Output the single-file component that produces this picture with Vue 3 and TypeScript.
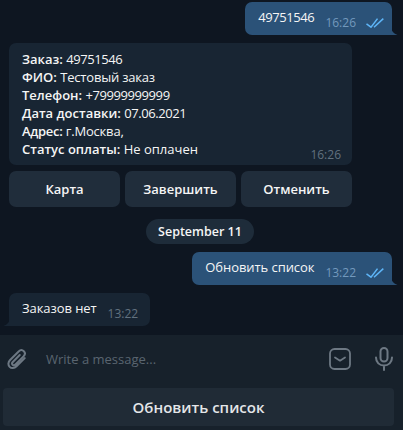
<script setup lang="ts">
const orderLines: { label: string; value: string; kind: string; labelKind?: string }[] = [
  { label: 'Заказ:', value: '49751546', kind: 'digits' },
  { label: 'ФИО:', value: 'Тестовый заказ', kind: 'tight' },
  { label: 'Телефон:', value: '+79999999999', kind: 'digits' },
  { label: 'Дата доставки:', value: '07.06.2021', kind: 'digits' },
  { label: 'Адрес:', value: 'г.Москва,', kind: 'tight', labelKind: 'tight-strong' },
  { label: 'Статус оплаты:', value: 'Не оплачен', kind: 'plain' },
]
const actions: string[] = ['Карта', 'Завершить', 'Отменить']
</script>

<template>
  <div class="screen">
    <div class="history">
      <div class="row out first">
        <div class="bubble outgoing">
          <span class="text digits">49751546</span>
          <span class="meta"><span class="time">16:26</span>
            <svg class="ticks" width="18" height="10" viewBox="0 0 18 10" fill="none" stroke="#5eb5f7" stroke-width="1.5">
              <path d="M.5 5.8 5 9.2 11.5.6" /><path d="M8 9.2 17.3.6" />
            </svg>
          </span>
          <svg class="tail tail-out" width="7" height="9" viewBox="0 0 7 9"><path d="M0 0C0 4 2 7.5 6.5 9H0Z" fill="#2b5278" /></svg>
        </div>
      </div>

      <div class="bubble incoming order">
        <div v-for="line in orderLines" :key="line.label" class="line"><b :class="line.labelKind">{{ line.label }}</b> <span :class="line.kind">{{ line.value }}</span></div>
        <span class="order-time">16:26</span>
      </div>

      <div class="actions">
        <button v-for="a in actions" :key="a" class="action">{{ a }}</button>
      </div>

      <div class="date-wrap"><span class="date">September 11</span></div>

      <div class="row out">
        <div class="bubble outgoing">
          <span class="text slim">Обновить список</span>
          <span class="meta"><span class="time">13:22</span>
            <svg class="ticks" width="18" height="10" viewBox="0 0 18 10" fill="none" stroke="#5eb5f7" stroke-width="1.5">
              <path d="M.5 5.8 5 9.2 11.5.6" /><path d="M8 9.2 17.3.6" />
            </svg>
          </span>
          <svg class="tail tail-out" width="7" height="9" viewBox="0 0 7 9"><path d="M0 0C0 4 2 7.5 6.5 9H0Z" fill="#2b5278" /></svg>
        </div>
      </div>

      <div class="row in">
        <div class="bubble incoming short">
          <span class="text slim">Заказов нет</span>
          <span class="meta in-meta"><span class="time in-time">13:22</span></span>
          <svg class="tail tail-in" width="7" height="9" viewBox="0 0 7 9"><path d="M7 0C7 4 5 7.5 .5 9H7Z" fill="#182533" /></svg>
        </div>
      </div>
    </div>

    <div class="composer">
      <div class="input-row">
        <svg class="clip" width="20" height="23" viewBox="0 0 22 24" fill="none" stroke="#6d7883" stroke-width="2.2" stroke-linecap="round">
          <path d="M19.5 10.5 10.5 19.5C8 22 4.7 22 2.9 20.1 1 18.2 1 15 3.4 12.6L12.8 3.2C14.6 1.4 17 1.4 18.5 2.9 20 4.4 20 6.8 18.2 8.6L9.3 17.5C8.3 18.5 7 18.5 6.2 17.7 5.4 16.9 5.5 15.6 6.4 14.7L14 7" />
        </svg>
        <span class="placeholder">Write a message...</span>
        <svg class="cmd" width="22" height="22" viewBox="0 0 22 22" fill="none" stroke="#6d7883" stroke-width="1.8" stroke-linecap="round" stroke-linejoin="round">
          <rect x="1" y="1" width="20" height="20" rx="4.5" /><path d="M6 9.5 11 12.7 16 9.5" />
        </svg>
        <svg class="mic" width="18" height="24" viewBox="0 0 18 24" fill="none" stroke="#6d7883" stroke-width="2" stroke-linecap="round">
          <rect x="5.5" y="1" width="7" height="13.5" rx="3.5" /><path d="M1 10.5C1 15.5 4.5 18.5 9 18.5S17 15.5 17 10.5M9 18.5V23" />
        </svg>
      </div>
      <button class="refresh">Обновить список</button>
    </div>
  </div>
</template>

<style>
html, body { margin: 0; background: #0e1621; }
</style>

<style scoped>
.screen {
  width: 403px;
  height: 430px;
  display: flex;
  flex-direction: column;
  overflow: hidden;
  background: #0e1621;
  font-family: "Open Sans", sans-serif;
  font-size: 13px;
  color: #f5f5f5;
}
.history {
  height: 335px;
  flex: none;
  padding: 2px 6px 0 9px;
  box-sizing: border-box;
}
.row { display: flex; }
.row.out { justify-content: flex-end; margin-top: 8px; padding-right: 5px; }
.row.out.first { margin-top: 0; }
.row.in { margin-top: 8px; }
.bubble { position: relative; border-radius: 7px; box-sizing: border-box; }
.outgoing {
  background: #2b5278;
  height: 33px;
  display: flex;
  padding: 7px 8px 0 13px;
  border-bottom-right-radius: 0;
}
.incoming { background: #182533; }
.order {
  width: 343px;
  height: 122px;
  margin-top: 8px;
  padding: 7px 13px 0;
  position: relative;
}
.short {
  height: 33px;
  display: flex;
  padding: 7px 7px 0 13px;
  border-bottom-left-radius: 0;
  width: 141px;
}
.line { line-height: 18px; white-space: nowrap; }
.line b { font-weight: 600; }
.digits { letter-spacing: -0.42px; }
.tight { letter-spacing: -0.2px; }
.line b.tight-strong { letter-spacing: -0.3px; }
.slim { letter-spacing: -0.07px; }
.text { line-height: 18px; white-space: nowrap; margin-top: -1px; }
.meta {
  margin-left: 11px;
  display: flex;
  align-items: center;
  gap: 10px;
  height: 18px;
  margin-top: 5px;
}
.in-meta { margin-left: 11px; }
.time { font-size: 12px; color: #7399bd; line-height: 16px; }
.in-time { color: #62717f; }
.order-time {
  position: absolute;
  right: 11px;
  bottom: 2px;
  font-size: 12px;
  color: #62717f;
}
.ticks { display: block; }
.tail { position: absolute; bottom: 0; }
.tail-out { right: -5.5px; }
.tail-in { left: -6.5px; }
.actions {
  width: 343px;
  margin-top: 6px;
  display: grid;
  grid-template-columns: repeat(3, 1fr);
  gap: 5px;
}
.action {
  height: 36px;
  border: 0;
  padding: 0;
  border-radius: 7px;
  background: #202d3b;
  color: #f5f5f5;
  font: 600 13px "Open Sans", sans-serif;
}
.date-wrap { width: 382px; margin-top: 12px; display: flex; justify-content: center; }
.date {
  height: 25px;
  line-height: 25px;
  padding: 0 12px;
  border-radius: 13px;
  background: #1e2c3a;
  font-weight: 600;
  font-size: 12.5px;
}
.composer {
  flex: 1;
  background: #17212b;
  padding: 0 9px 3px 3px;
  display: flex;
  flex-direction: column;
}
.input-row {
  height: 53px;
  box-sizing: border-box;
  padding: 0 0 5px 4px;
  display: flex;
  align-items: center;
}
.clip { flex: none; }
.placeholder { margin-left: 19px; color: #5a6570; font-size: 13px; flex: 1; }
.cmd { flex: none; margin-right: 24px; }
.mic { flex: none; margin-right: 1px; }
.refresh {
  height: 38px;
  flex: none;
  border: 0;
  border-radius: 4px;
  background: #202b36;
  color: #e4e6e8;
  font: 600 15px "Open Sans", sans-serif;
}
</style>
